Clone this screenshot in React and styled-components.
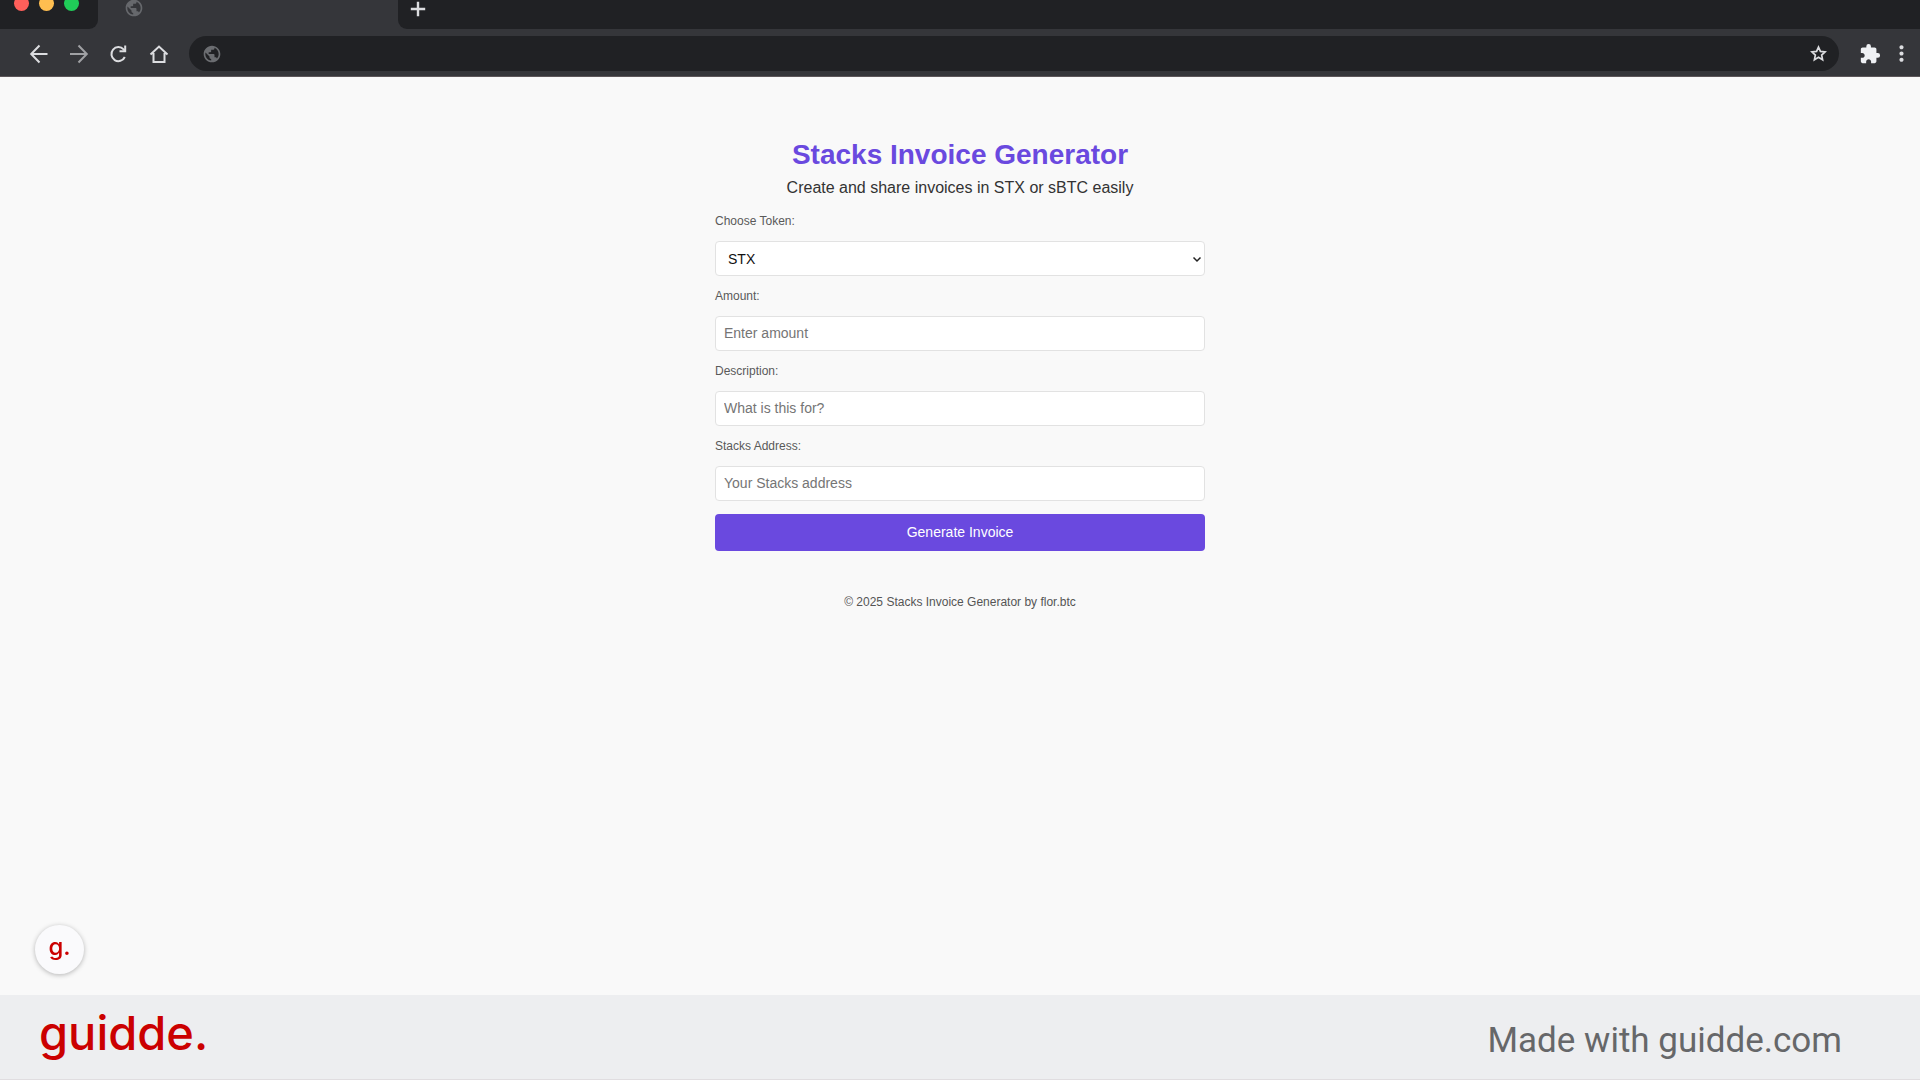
import React, { useState } from "react";
import styled, { createGlobalStyle } from "styled-components";
import { MdPublic, MdExtension, MdMoreVert } from "react-icons/md";

const GlobalStyle = createGlobalStyle`
    * {
        box-sizing: border-box;
    }

    body {
        margin: 0;
        background-color: #f9f9f9;
        font-family: "Liberation Sans", Arial, sans-serif;
    }
`;

const Page = styled.div`
    min-height: 100vh;
    display: flex;
    flex-direction: column;
`;

const TabStrip = styled.div`
    display: flex;
    height: 29px;
    background-color: #35363a;
`;

const WindowControls = styled.div`
    width: 98px;
    padding-left: 14px;
    display: flex;
    gap: 10px;
    background-color: #202124;
    border-bottom-right-radius: 9px;
    overflow: hidden;
`;

const Light = styled.span`
    width: 15px;
    height: 15px;
    margin-top: -4px;
    border-radius: 50%;
    background-color: ${(props) => props.$color};
`;

const Tab = styled.div`
    width: 300px;
    padding-left: 26px;
    overflow: hidden;
    color: #66686c;

    svg {
        display: block;
        margin-top: -2px;
    }
`;

const TabRest = styled.div`
    flex: 1;
    padding: 1px 0 0 12px;
    background-color: #202124;
    border-bottom-left-radius: 9px;
`;

const Toolbar = styled.div`
    display: flex;
    align-items: center;
    height: 48px;
    padding: 2px 6px 0 19px;
    background-color: #35363a;
    border-bottom: 1px solid #5c5659;
`;

const IconButton = styled.button`
    width: ${(props) => props.$width || 40}px;
    height: 36px;
    padding: 0;
    border: none;
    background: none;
    display: flex;
    align-items: center;
    justify-content: center;
    color: ${(props) => props.$color || "#dcdde0"};
`;

const PlusButton = styled(IconButton)`
    height: 16px;
`;

const AddressBar = styled.div`
    flex: 1;
    height: 35px;
    margin: 0 12px 0 10px;
    padding: 0 10px 0 13px;
    display: flex;
    align-items: center;
    border-radius: 18px;
    background-color: #202124;
    color: #6b6d71;
`;

const AddressInput = styled.input`
    flex: 1;
    margin-left: 8px;
    border: none;
    outline: none;
    background: none;
    color: #e8eaed;
    font-size: 14px;
`;

const Main = styled.main`
    flex: 1;
    width: 100%;
    max-width: 490px;
    margin: 0 auto;
    padding-top: 62px;
`;

const Title = styled.h1`
    margin: 0;
    font-size: 28px;
    line-height: 32px;
    text-align: center;
    color: #6a49df;
`;

const Subtitle = styled.p`
    margin: 7px 0 16px;
    font-size: 16px;
    line-height: 20px;
    text-align: center;
    color: #333;
`;

const Form = styled.form`
    display: flex;
    flex-direction: column;
`;

const Field = styled.div`
    display: flex;
    flex-direction: column;
    gap: 13px;
    margin-bottom: 13px;
`;

const Label = styled.label`
    font-size: 12px;
    line-height: 14px;
    color: #5a5a5a;
`;

const Input = styled.input`
    width: 100%;
    height: 35px;
    padding: 7px 8px 9px;
    border: 1px solid #e2e2e2;
    border-radius: 4px;
    background-color: #fff;
    font-family: inherit;
    font-size: 14px;

    &::placeholder {
        color: #757575;
    }
`;

const SelectBox = styled.div`
    position: relative;

    svg {
        position: absolute;
        right: 3px;
        top: 13px;
        color: #222;
        pointer-events: none;
    }
`;

const Select = styled.select`
    display: block;
    width: 100%;
    height: 35px;
    padding: 8px 12px;
    appearance: none;
    border: 1px solid #e2e2e2;
    border-radius: 4px;
    background-color: #fff;
    color: #111;
    font-family: inherit;
    font-size: 14px;
`;

const SubmitButton = styled.button`
    height: 37px;
    padding: 0 0 2px;
    border: none;
    border-radius: 4px;
    background-color: #6a49df;
    color: #fff;
    font-family: inherit;
    font-size: 14px;
`;

const Footer = styled.footer`
    margin-top: 44px;
    font-size: 12px;
    line-height: 14px;
    text-align: center;
    color: #555;
`;

const Banner = styled.div`
    display: flex;
    align-items: center;
    justify-content: space-between;
    height: 85px;
    padding: 0 78px 0 39px;
    background-color: #edeef0;
    border-bottom: 1px solid #e0dde0;
`;

const Wordmark = styled.span`
    padding-bottom: ${(props) => props.$lift}px;
    font-family: Inter, sans-serif;
    font-size: ${(props) => props.$size}px;
    font-weight: 500;
    line-height: 1;
    color: #cb0000;
`;

const MadeWith = styled.span`
    padding-top: 8px;
    font-family: Roboto, sans-serif;
    font-size: 35px;
    line-height: 42px;
    color: #666769;
`;

const Bubble = styled.button`
    position: fixed;
    left: 35px;
    bottom: 106px;
    width: 49px;
    height: 49px;
    padding: 0;
    border: none;
    border-radius: 50%;
    display: flex;
    align-items: center;
    justify-content: center;
    background-color: #fafafc;
    box-shadow: 0 1px 5px rgba(0, 0, 0, 0.28);
`;

const Icon = ({ size = 20, width = 2, children }) => (
  <svg width={size} height={size} viewBox="0 0 20 20" fill="none" stroke="currentColor" strokeWidth={width}>
    {children}
  </svg>
);

const fields = [
  { id: "amount", label: "Amount:", placeholder: "Enter amount" },
  { id: "description", label: "Description:", placeholder: "What is this for?" },
  { id: "address", label: "Stacks Address:", placeholder: "Your Stacks address" },
];

const BrowserBar = () => (
  <header>
    <TabStrip>
      <WindowControls>
        <Light $color="#ff5f5a" />
        <Light $color="#ffbe50" />
        <Light $color="#20cc58" />
      </WindowControls>
      <Tab><MdPublic size={20} /></Tab>
      <TabRest>
        <PlusButton $width={16} aria-label="New tab">
          <Icon size={16} width={3}><path d="M10 1v18M1 10h18" /></Icon>
        </PlusButton>
      </TabRest>
    </TabStrip>
    <Toolbar>
      <IconButton aria-label="Back">
        <Icon><path d="M18.500 10H2.500M10.500 1.500L2.200 10l8.300 8.500" /></Icon>
      </IconButton>
      <IconButton aria-label="Forward" $color="#a0a1a4">
        <Icon><path d="M1 10h16.500M9.500 1.500L17.800 10l-8.300 8.500" /></Icon>
      </IconButton>
      <IconButton aria-label="Reload">
        <Icon>
          <path d="M15.800 13a7 7 0 1 1-1.200-7.600L16 6.800" />
          <path d="M16.200 1.500V7.300H10.500" />
        </Icon>
      </IconButton>
      <IconButton aria-label="Home">
        <Icon><path d="M1.500 10.500L10 2.500l8.500 8M4.500 9v9h11V9" /></Icon>
      </IconButton>
      <AddressBar>
        <MdPublic size={20} />
        <AddressInput aria-label="Address" />
        <IconButton $width={22} aria-label="Bookmark">
          <Icon size={17}>
            <path d="M10 2.500l2.300 5 5.500.6-4.100 3.700 1.100 5.500-4.800-2.800-4.800 2.800 1.100-5.500L2.200 8.100l5.500-.6z" />
          </Icon>
        </IconButton>
      </AddressBar>
      <IconButton $width={38} $color="#eff1f4" aria-label="Extensions"><MdExtension size={22} /></IconButton>
      <IconButton $width={25} aria-label="Menu"><MdMoreVert size={25} /></IconButton>
    </Toolbar>
  </header>
);

const App = () => {
  const [token, setToken] = useState("STX");

  return (
    <Page>
      <GlobalStyle />
      <BrowserBar />
      <Main>
        <Title>Stacks Invoice Generator</Title>
        <Subtitle>Create and share invoices in STX or sBTC easily</Subtitle>
        <Form onSubmit={(e) => e.preventDefault()}>
          <Field>
            <Label htmlFor="token">Choose Token:</Label>
            <SelectBox>
              <Select id="token" value={token} onChange={(e) => setToken(e.target.value)}>
                <option value="STX">STX</option>
                <option value="sBTC">sBTC</option>
              </Select>
              <Icon size={10} width={3}><path d="M3 7l7 7 7-7" /></Icon>
            </SelectBox>
          </Field>
          {fields.map((field) => (
            <Field key={field.id}>
              <Label htmlFor={field.id}>{field.label}</Label>
              <Input id={field.id} placeholder={field.placeholder} />
            </Field>
          ))}
          <SubmitButton type="submit">Generate Invoice</SubmitButton>
        </Form>
        <Footer>© 2025 Stacks Invoice Generator by flor.btc</Footer>
      </Main>
      <Banner>
        <Wordmark $size={47} $lift={10}>guidde.</Wordmark>
        <MadeWith>Made with guidde.com</MadeWith>
      </Banner>
      <Bubble aria-label="Open guidde">
        <Wordmark $size={24} $lift={6}>g.</Wordmark>
      </Bubble>
    </Page>
  );
};

export default App;
